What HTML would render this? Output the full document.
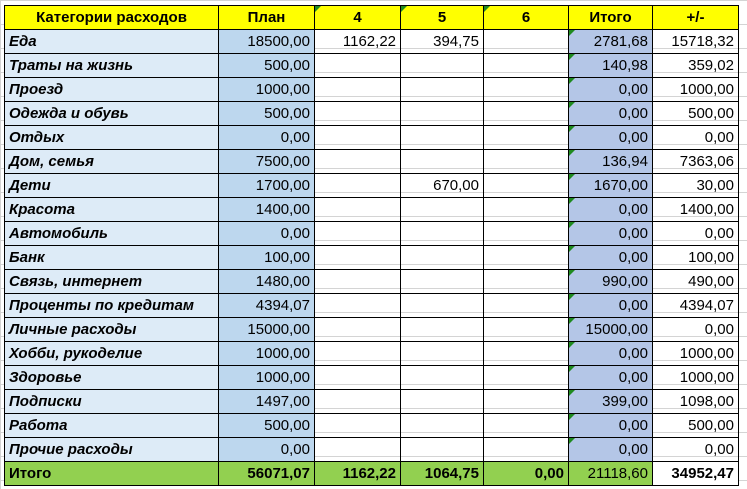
<!DOCTYPE html>
<html><head><meta charset="utf-8"><style>
html,body{margin:0;padding:0;background:#fff;width:747px;height:489px;overflow:hidden}
.bg{position:absolute;left:0;top:0;width:747px;height:489px;
background-image:linear-gradient(#d4d4d4 1px,transparent 1px),linear-gradient(90deg,#d4d4d4 1px,transparent 1px);
background-size:100% 24px,100% 100%;}
table{position:absolute;left:4px;top:5px;border-collapse:collapse;table-layout:fixed;
font-family:"Liberation Sans",Arial,sans-serif;font-size:15px;color:#000}
td{border:1px solid #000;height:24px;padding:0 4px;white-space:nowrap;overflow:hidden;text-align:right;position:relative;box-sizing:border-box}
tr.h td{background:#ffff00;font-weight:bold;text-align:center;border-top:1px solid #000}
td.c{background:#ddebf7;font-weight:bold;font-style:italic;text-align:left}
td.p{background:#bdd7ee}
td.i{background:#b4c6e7}
td.t:before,td.i:before{content:"";position:absolute;left:0;top:0;border-top:6px solid #1f8a1f;border-right:6px solid transparent}
tr.f td{background:#92d050;font-weight:bold}
tr.f td.c{font-style:normal;background:#92d050}
tr.f td.n{font-weight:normal}
tr.f td.w{background:#fff}
</style></head><body>
<div class="bg"></div>
<table>
<colgroup><col style="width:214px"><col style="width:96px"><col style="width:86px"><col style="width:83px"><col style="width:85px"><col style="width:84px"><col style="width:86px"></colgroup>
<tr class="h"><td>Категории расходов</td><td>План</td><td class="t">4</td><td class="t">5</td><td class="t">6</td><td>Итого</td><td>+/-</td></tr>
<tr><td class="c">Еда</td><td class="p">18500,00</td><td>1162,22</td><td>394,75</td><td></td><td class="i">2781,68</td><td>15718,32</td></tr>
<tr><td class="c">Траты на жизнь</td><td class="p">500,00</td><td></td><td></td><td></td><td class="i">140,98</td><td>359,02</td></tr>
<tr><td class="c">Проезд</td><td class="p">1000,00</td><td></td><td></td><td></td><td class="i">0,00</td><td>1000,00</td></tr>
<tr><td class="c">Одежда и обувь</td><td class="p">500,00</td><td></td><td></td><td></td><td class="i">0,00</td><td>500,00</td></tr>
<tr><td class="c">Отдых</td><td class="p">0,00</td><td></td><td></td><td></td><td class="i">0,00</td><td>0,00</td></tr>
<tr><td class="c">Дом, семья</td><td class="p">7500,00</td><td></td><td></td><td></td><td class="i">136,94</td><td>7363,06</td></tr>
<tr><td class="c">Дети</td><td class="p">1700,00</td><td></td><td>670,00</td><td></td><td class="i">1670,00</td><td>30,00</td></tr>
<tr><td class="c">Красота</td><td class="p">1400,00</td><td></td><td></td><td></td><td class="i">0,00</td><td>1400,00</td></tr>
<tr><td class="c">Автомобиль</td><td class="p">0,00</td><td></td><td></td><td></td><td class="i">0,00</td><td>0,00</td></tr>
<tr><td class="c">Банк</td><td class="p">100,00</td><td></td><td></td><td></td><td class="i">0,00</td><td>100,00</td></tr>
<tr><td class="c">Связь, интернет</td><td class="p">1480,00</td><td></td><td></td><td></td><td class="i">990,00</td><td>490,00</td></tr>
<tr><td class="c">Проценты по кредитам</td><td class="p">4394,07</td><td></td><td></td><td></td><td class="i">0,00</td><td>4394,07</td></tr>
<tr><td class="c">Личные расходы</td><td class="p">15000,00</td><td></td><td></td><td></td><td class="i">15000,00</td><td>0,00</td></tr>
<tr><td class="c">Хобби, рукоделие</td><td class="p">1000,00</td><td></td><td></td><td></td><td class="i">0,00</td><td>1000,00</td></tr>
<tr><td class="c">Здоровье</td><td class="p">1000,00</td><td></td><td></td><td></td><td class="i">0,00</td><td>1000,00</td></tr>
<tr><td class="c">Подписки</td><td class="p">1497,00</td><td></td><td></td><td></td><td class="i">399,00</td><td>1098,00</td></tr>
<tr><td class="c">Работа</td><td class="p">500,00</td><td></td><td></td><td></td><td class="i">0,00</td><td>500,00</td></tr>
<tr><td class="c">Прочие расходы</td><td class="p">0,00</td><td></td><td></td><td></td><td class="i">0,00</td><td>0,00</td></tr>
<tr class="f"><td class="c">Итого</td><td>56071,07</td><td>1162,22</td><td>1064,75</td><td>0,00</td><td class="n">21118,60</td><td class="w">34952,47</td></tr>
</table>
</body></html>
